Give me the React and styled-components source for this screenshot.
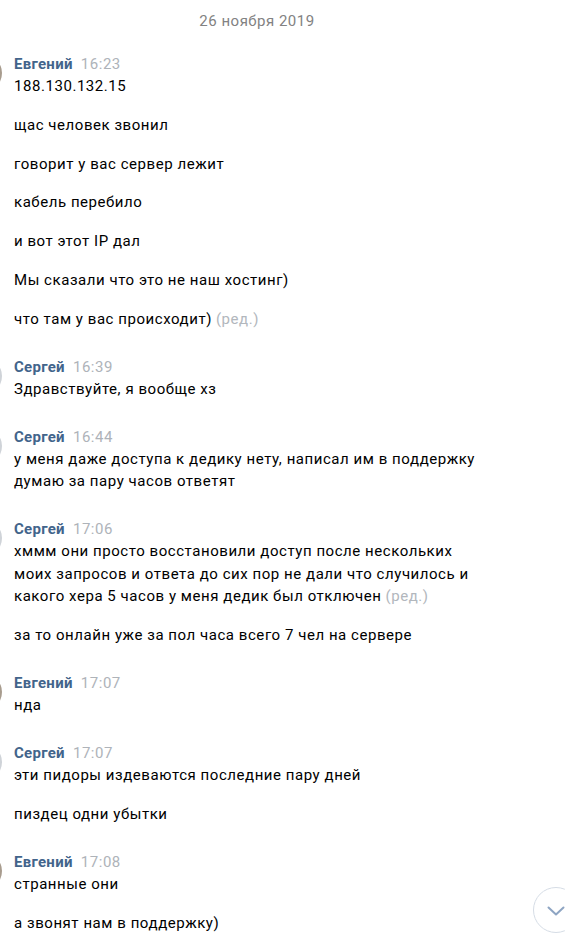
import React from 'react';
import styled, { createGlobalStyle } from 'styled-components';

const GlobalStyle = createGlobalStyle`
  html, body {
    margin: 0;
    padding: 0;
    background: #fff;
  }
  body {
    font-family: Roboto, "Liberation Sans", Arial, sans-serif;
    font-size: 15px;
    color: #000;
    -webkit-font-smoothing: antialiased;
  }
`;

const groups = [
  {
    name: 'Евгений',
    time: '16:23',
    avatar: '#a89c8e',
    messages: [
      { text: '188.130.132.15' },
      { text: 'щас человек звонил' },
      { text: 'говорит у вас сервер лежит' },
      { text: 'кабель перебило' },
      { text: 'и вот этот IP дал' },
      { text: 'Мы сказали что это не наш хостинг)' },
      { text: 'что там у вас происходит)', edited: true },
    ],
  },
  {
    name: 'Сергей',
    time: '16:39',
    avatar: '#cfd3d8',
    messages: [{ text: 'Здравствуйте, я вообще хз' }],
  },
  {
    name: 'Сергей',
    time: '16:44',
    avatar: '#cfd3d8',
    messages: [
      { text: 'у меня даже доступа к дедику нету, написал им в поддержку думаю за пару часов ответят' },
    ],
  },
  {
    name: 'Сергей',
    time: '17:06',
    avatar: '#cfd3d8',
    messages: [
      {
        text: 'хммм они просто восстановили доступ после нескольких моих запросов и ответа до сих пор не дали что случилось и какого хера 5 часов у меня дедик был отключен',
        edited: true,
      },
      { text: 'за то онлайн уже за пол часа всего 7 чел на сервере' },
    ],
  },
  {
    name: 'Евгений',
    time: '17:07',
    avatar: '#a89c8e',
    messages: [{ text: 'нда' }],
  },
  {
    name: 'Сергей',
    time: '17:07',
    avatar: '#cfd3d8',
    messages: [
      { text: 'эти пидоры издеваются последние пару дней' },
      { text: 'пиздец одни убытки' },
    ],
  },
  {
    name: 'Евгений',
    time: '17:08',
    avatar: '#a89c8e',
    messages: [
      { text: 'странные они' },
      { text: 'а звонят нам в поддержку)' },
    ],
  },
];

export default function App() {
  return (
    <>
      <GlobalStyle />
      <Styled.Chat>
        <Styled.DateRow>26 ноября 2019</Styled.DateRow>
        {groups.map((g, i) => (
          <Styled.Group key={i}>
            <Styled.Avatar color={g.avatar} />
            <Styled.Body>
              <Styled.Header>
                <Styled.Name>{g.name}</Styled.Name>
                <Styled.Time>{g.time}</Styled.Time>
              </Styled.Header>
              {g.messages.map((m, j) => (
                <Styled.Message key={j}>
                  {m.text}
                  {m.edited && <Styled.Edited>(ред.)</Styled.Edited>}
                </Styled.Message>
              ))}
            </Styled.Body>
          </Styled.Group>
        ))}
      </Styled.Chat>
      <Styled.ScrollDown aria-label="вниз">
        <svg width="18" height="10" viewBox="0 0 18 10" fill="none">
          <polyline
            points="1.5,1.5 9,8.5 16.5,1.5"
            stroke="#8ea5c3"
            strokeWidth="2"
            strokeLinecap="round"
            strokeLinejoin="round"
          />
        </svg>
      </Styled.ScrollDown>
    </>
  );
}

const Styled = {
  Chat: styled.div`
    width: 514px;
    padding-top: 10px;
    overflow: hidden;
  `,
  DateRow: styled.div`
    text-align: center;
    color: #828282;
    line-height: 22px;
    letter-spacing: 0.5px;
    margin-bottom: 21px;
  `,
  Group: styled.div`
    display: flex;
    align-items: flex-start;
    & + & {
      margin-top: 25.5px;
    }
  `,
  Avatar: styled.div`
    flex: none;
    width: 36px;
    height: 36px;
    border-radius: 50%;
    margin-left: -34px;
    margin-right: 12px;
    margin-top: 2px;
    background: ${p => p.color};
  `,
  Body: styled.div`
    flex: 1;
    max-width: 472px;
    letter-spacing: 0.55px;
  `,
  Header: styled.div`
    display: flex;
    align-items: baseline;
    gap: 8px;
    line-height: 22px;
  `,
  Name: styled.span`
    color: #42648b;
    font-weight: 700;
    letter-spacing: 0.3px;
  `,
  Time: styled.span`
    color: #aeb3b9;
  `,
  Message: styled.div`
    line-height: 22.5px;
    & + & {
      margin-top: 16.3px;
    }
  `,
  Edited: styled.span`
    color: #b2b7bd;
    margin-left: 4px;
  `,
  ScrollDown: styled.button`
    position: fixed;
    right: -14px;
    bottom: 9px;
    width: 46px;
    height: 46px;
    padding: 0;
    border: 1px solid #d5dce5;
    border-radius: 50%;
    background: #fff;
    display: flex;
    align-items: center;
    justify-content: center;
    svg {
      margin-top: 2px;
    }
  `,
};
